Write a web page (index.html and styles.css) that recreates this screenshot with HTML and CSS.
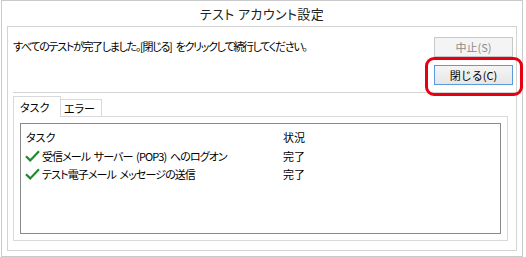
FILE: index.html
```html
<!DOCTYPE html>
<html lang="ja">
<head>
    <meta charset="UTF-8">
    <title>テスト アカウント設定</title>
    <link rel="stylesheet" href="styles.css">
</head>
<body>
    <div class="window">
        <div class="titlebar">テスト アカウント設定</div>
        <div class="panel">
            <div class="top">
                <p class="msg">すべてのテストが完了しました。[閉じる] をクリックして続行してください。</p>
                <div class="actions">
                    <button class="btn" disabled>中止(S)</button>
                    <div class="highlight">
                        <button class="btn default">閉じる(C)</button>
                    </div>
                </div>
            </div>
            <div class="sep"></div>
            <div class="tabs">
                <div class="tab active">タスク</div>
                <div class="tab">エラー</div>
            </div>
            <div class="tabpanel">
                <div class="list">
                    <div class="row head">
                        <span>タスク</span>
                        <span>状況</span>
                    </div>
                    <div class="row">
                        <span class="task">
                            <svg class="check" viewBox="0 0 15 12"><path d="M1 6.2 L5.2 10.4 L14 1.2"/></svg>
                            受信メール サーバー (POP3) へのログオン
                        </span>
                        <span>完了</span>
                    </div>
                    <div class="row">
                        <span class="task">
                            <svg class="check" viewBox="0 0 15 12"><path d="M1 6.2 L5.2 10.4 L14 1.2"/></svg>
                            テスト電子メール メッセージの送信
                        </span>
                        <span>完了</span>
                    </div>
                </div>
            </div>
        </div>
    </div>
</body>
</html>
```

FILE: styles.css
```css
body {
    margin: 0;
    background: #FFFFFF;
    font-family: "Noto Sans CJK JP", "Noto Sans", sans-serif;
    font-feature-settings: "palt";
    color: #000000;
}
.window {
    width: 520px;
    height: 255px;
    margin-left: 1px;
    border: 1px solid #CACACA;
    display: flex;
    flex-direction: column;
}
.titlebar {
    height: 25px;
    line-height: 25px;
    text-align: center;
    font-size: 13px;
    letter-spacing: 0.4px;
    color: #222222;
}
.panel {
    flex: 1;
    margin: 0 5px 5px;
    border: 1px solid #D4D4D4;
    display: flex;
    flex-direction: column;
}
.top {
    display: flex;
    padding: 10px 3px 0 5px;
}
.msg {
    flex: 1;
    margin: -1px 0 0;
    font-size: 11px;
    line-height: 20px;
    letter-spacing: -1.3px;
    word-spacing: 3px;
}
.actions {
    display: flex;
    flex-direction: column;
    gap: 8px;
    width: 79px;
}
.btn {
    display: block;
    width: 79px;
    height: 20px;
    padding: 0;
    font-family: inherit;
    font-size: 11px;
    border: 1px solid #ADADAD;
    background: linear-gradient(#F5F5F5, #E6E6E6);
    color: #000000;
}
.btn:disabled {
    border-color: #C8C8C8;
    background: #F4F4F4;
    color: #8A8A8A;
}
.btn.default {
    border-color: #5A9BE0;
}
.highlight {
    position: relative;
}
.highlight::after {
    content: '';
    position: absolute;
    top: -8px;
    left: -9px;
    right: -10px;
    bottom: -11px;
    border: 3px solid #E60012;
    border-radius: 9px;
}
.sep {
    height: 1px;
    margin: 7px 0 0 5px;
    background: #D4D4D4;
}
.tabs {
    display: flex;
    align-items: flex-end;
    margin: 3px 0 0 5px;
    font-size: 11px;
}
.tab {
    height: 16px;
    line-height: 16px;
    width: 37px;
    padding-left: 3px;
    margin-left: -1px;
    border: 1px solid #D9D9D9;
    border-bottom: 0;
    background: #FFFFFF;
}
.tab.active {
    position: relative;
    z-index: 1;
    height: 20px;
    line-height: 20px;
    width: 40px;
    padding-left: 6px;
    margin: 0 0 -1px;
}
.tabpanel {
    flex: 1;
    margin: 0 8px 9px 5px;
    padding: 6px;
    border: 1px solid #D9D9D9;
    display: flex;
}
.list {
    flex: 1;
    padding: 3px 0 0 4px;
    border: 1px solid #8A8A8A;
    font-size: 11px;
}
.row {
    display: grid;
    grid-template-columns: 258px 1fr;
    align-items: center;
    height: 18px;
}
.row.head {
    height: 20px;
}
.row.head span:first-child {
    padding-left: 1px;
}
.task {
    display: flex;
    align-items: center;
    gap: 2px;
    letter-spacing: -0.9px;
    word-spacing: 2px;
}
.check {
    width: 15px;
    height: 12px;
    fill: none;
    stroke: #1E8C2A;
    stroke-width: 2.2;
}
```
